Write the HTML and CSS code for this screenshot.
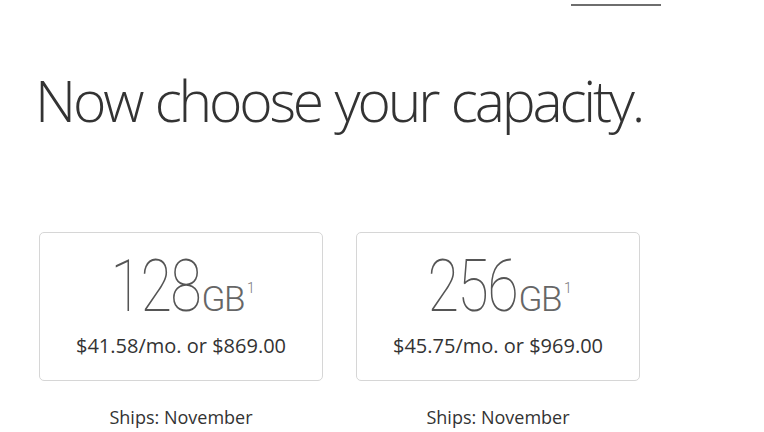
FILE: index.html
```html
<!DOCTYPE html>
<html>
<head>
<meta charset="utf-8">
<link rel="stylesheet" href="styles.css">
</head>
<body>
<div class="topbar"><span class="tab-line"></span></div>
<h1 class="title">Now choose your capacity.</h1>
<div class="options">
  <div class="option">
    <div class="card">
      <div class="size"><span class="num">128</span><span class="unit">GB</span><sup class="note">1</sup></div>
      <div class="price">$41.58/mo. or $869.00</div>
    </div>
    <div class="ships">Ships: November</div>
  </div>
  <div class="option">
    <div class="card">
      <div class="size"><span class="num">256</span><span class="unit">GB</span><sup class="note">1</sup></div>
      <div class="price">$45.75/mo. or $969.00</div>
    </div>
    <div class="ships">Ships: November</div>
  </div>
</div>
</body>
</html>
```
FILE: styles.css
```css
html, body {
  margin: 0;
  padding: 0;
  background: #fff;
  font-family: "Open Sans", "Liberation Sans", sans-serif;
  color: #333;
}
.topbar {
  height: 20px;
  padding-left: 571px;
  padding-top: 4px;
  box-sizing: border-box;
}
.tab-line {
  display: block;
  width: 90px;
  height: 2px;
  background: #6e6e6e;
}
.title {
  margin: 45px 0 0 35px;
  font-family: "Open Sans", sans-serif;
  font-weight: 300;
  font-size: 57px;
  line-height: 70px;
  letter-spacing: -3.2px;
  word-spacing: 2px;
  color: #333;
}
.options {
  display: flex;
  gap: 33px;
  padding-left: 39px;
  margin-top: 97px;
}
.option {
  width: 284px;
  display: flex;
  flex-direction: column;
  align-items: center;
}
.card {
  width: 284px;
  height: 149px;
  box-sizing: border-box;
  border: 1px solid #d6d6d6;
  border-radius: 5px;
  display: flex;
  flex-direction: column;
  align-items: center;
  padding-top: 14px;
}
.size {
  display: flex;
  align-items: baseline;
  color: #555;
  height: 80px;
  padding-left: 4px;
}
.num {
  display: inline-block;
  font-family: "Roboto", "Open Sans", sans-serif;
  font-weight: 100;
  font-size: 72px;
  line-height: 80px;
  letter-spacing: -2px;
  transform: scaleX(0.8);
  transform-origin: right center;
  margin-left: -23px;
}
.unit {
  font-family: "Roboto", "Open Sans", sans-serif;
  font-weight: 300;
  font-size: 35px;
  line-height: 40px;
  letter-spacing: -1.5px;
  color: #666;
  margin-left: 1px;
}
.note {
  font-family: "Roboto", "Open Sans", sans-serif;
  font-weight: 300;
  font-size: 14px;
  color: #777;
  align-self: flex-start;
  margin-top: 33px;
  margin-left: 3px;
}
.price {
  font-size: 20px;
  line-height: 26px;
  color: #333;
  margin-top: 6px;
}
.ships {
  margin-top: 24px;
  font-size: 18px;
  color: #333;
}
```
